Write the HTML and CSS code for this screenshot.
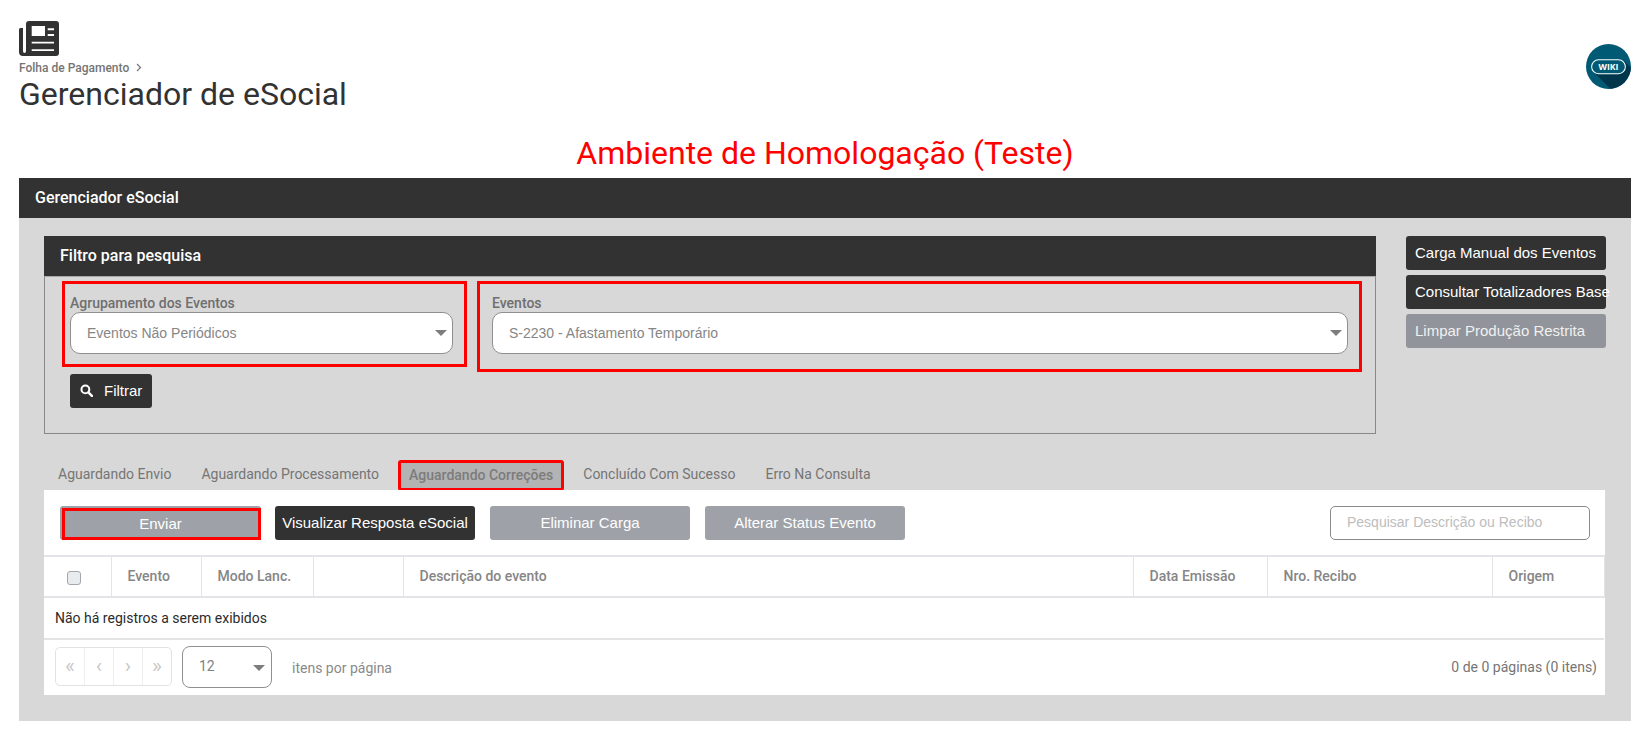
FILE: index.html
```html
<!DOCTYPE html>
<html lang="pt-br">
<head>
  <meta charset="UTF-8" />
  <title>Gerenciador de eSocial</title>
  <link rel="stylesheet" href="styles.css">
</head>
<body>

<div class="page">
  <header class="topo">
    <div class="topo-esq">
      <svg class="icone-jornal" viewBox="0 0 40 35" width="40" height="35">
        <path fill="#323232" fill-rule="evenodd" d="M4 7H1.5Q0 7 0 8.500V31Q0 35 4 35H37Q40 35 40 32V3Q40 0 37 0H10Q7 0 7 3V30Q7 32 5.500 32Q4 32 4 30ZM12.700 5H26V15H12.700ZM28.700 7.300H35V9.200H28.700ZM28.700 13H35V15H28.700ZM12.700 20.700H35V22.500H12.700ZM12.700 28.300H35V30H12.700Z"/>
      </svg>
      <div class="migalha">Folha de Pagamento
        <svg class="migalha-seta" viewBox="0 0 6 9" width="6" height="9"><path d="M1 1l3.500 3.500L1 8" fill="none" stroke="#757575" stroke-width="1.200"/></svg>
      </div>
      <h1>Gerenciador de eSocial</h1>
    </div>
    <svg class="wiki" viewBox="0 0 44 44" width="45" height="45">
      <defs><clipPath id="circulo"><circle cx="22" cy="22" r="22"/></clipPath></defs>
      <circle cx="22" cy="22" r="22" fill="#005a74"/>
      <path clip-path="url(#circulo)" fill="#00364c" d="M7 27L38 17L50 30L30 50Z"/>
      <rect x="5.500" y="15.500" width="33" height="13.500" rx="6.700" fill="#005a74" stroke="#fff" stroke-width="1"/>
      <text x="22" y="25.500" text-anchor="middle" class="wiki-txt">WIKI</text>
    </svg>
  </header>

  <div class="ambiente">Ambiente de Homologação (Teste)</div>

  <section class="gerenciador">
    <div class="barra">Gerenciador eSocial</div>
    <div class="gerenciador-corpo">

      <div class="linha-filtro">
        <div class="filtro">
          <div class="barra barra-filtro">Filtro para pesquisa</div>
          <div class="filtro-corpo">
            <div class="campos">
              <div class="campo campo-agrupamento">
                <label>Agrupamento dos Eventos</label>
                <div class="combo">Eventos Não Periódicos<span class="seta"></span></div>
              </div>
              <div class="campo campo-eventos">
                <label>Eventos</label>
                <div class="combo">S-2230 - Afastamento Temporário<span class="seta"></span></div>
              </div>
            </div>
            <button class="btn-filtrar">
              <svg viewBox="0 0 14 14" width="13" height="13"><circle cx="5.800" cy="5.800" r="4.200" fill="none" stroke="#fff" stroke-width="2.200"/><path d="M9 9l3.800 3.800" stroke="#fff" stroke-width="2.600" stroke-linecap="round"/></svg>
              Filtrar
            </button>
          </div>
        </div>
        <div class="acoes-lado">
          <button class="btn btn-escuro">Carga Manual dos Eventos</button>
          <button class="btn btn-escuro">Consultar Totalizadores Base</button>
          <button class="btn btn-apagado">Limpar Produção Restrita</button>
        </div>
      </div>

      <div class="abas">
        <div class="aba">Aguardando Envio</div>
        <div class="aba">Aguardando Processamento</div>
        <div class="aba aba-ativa">Aguardando Correções</div>
        <div class="aba">Concluído Com Sucesso</div>
        <div class="aba">Erro Na Consulta</div>
      </div>

      <div class="painel">
        <div class="ferramentas">
          <button class="btn-acao btn-desab btn-marcado"><span>Enviar</span></button>
          <button class="btn-acao btn-preto">Visualizar Resposta eSocial</button>
          <button class="btn-acao btn-desab">Eliminar Carga</button>
          <button class="btn-acao btn-desab">Alterar Status Evento</button>
          <input class="busca" type="text" placeholder="Pesquisar Descrição ou Recibo">
        </div>

        <table class="grade">
          <colgroup>
            <col class="c1"><col class="c2"><col class="c3"><col class="c4"><col class="c5"><col class="c6"><col class="c7"><col class="c8">
          </colgroup>
          <thead>
            <tr>
              <th class="th-check"><span class="check"></span></th>
              <th>Evento</th>
              <th>Modo Lanc.</th>
              <th></th>
              <th>Descrição do evento</th>
              <th>Data Emissão</th>
              <th>Nro. Recibo</th>
              <th>Origem</th>
            </tr>
          </thead>
          <tbody>
            <tr><td colspan="8">Não há registros a serem exibidos</td></tr>
          </tbody>
        </table>

        <div class="rodape">
          <div class="paginas">
            <span>«</span><span>‹</span><span>›</span><span>»</span>
          </div>
          <div class="combo combo-itens">12<span class="seta"></span></div>
          <span class="itens-txt">itens por página</span>
          <span class="total-txt">0 de 0 páginas (0 itens)</span>
        </div>
      </div>

    </div>
  </section>
</div>

</body>
</html>
```

FILE: styles.css
```css
body { margin: 0; background: #fff; font-family: Roboto, sans-serif; font-size: 14px; color: #323232; }
.page { padding: 21px 15px 13px 19px; }
button { font-family: "Liberation Sans", Arial, sans-serif; cursor: pointer; border: none; }

.topo { display: flex; justify-content: space-between; align-items: flex-start; height: 99px; }
.icone-jornal { display: block; }
.migalha { font-size: 12px; line-height: 14px; margin-top: 5px; color: #757575; font-weight: 500; }
.migalha-seta { margin-left: 4px; }
h1 { margin: -2px 0 0; font-size: 32px; line-height: 42px; font-weight: 400; color: #323232; }
.wiki { margin-top: 23px; }
.wiki-txt { font-family: "Open Sans", sans-serif; font-size: 8.500px; font-weight: 700; fill: #fff; }

.ambiente { color: #f00; font-size: 32px; line-height: 50px; padding-top: 8px; text-align: center; }

.gerenciador { background: #d8d8d8; height: 543px; }
.barra { background: #323232; color: #fff; font-size: 16px; font-weight: 500; height: 40px; line-height: 40px; padding-left: 16px; }
.gerenciador-corpo { padding: 18px 26px 0 25px; }

.linha-filtro { display: flex; justify-content: space-between; }
.filtro { width: 1332px; }
.barra-filtro { padding-left: 16px; }
.filtro-corpo { border: 1px solid #888; border-top-color: #a8a8a8; height: 158px; box-sizing: border-box; padding: 4px 0 0 17px; }

.campos { display: flex; gap: 10px; align-items: flex-start; }
.campo { border: 3px solid #f00; box-sizing: border-box; padding-top: 11px; flex: none; }
.campo label { display: block; font-size: 14px; line-height: 16px; margin-bottom: 1px; font-weight: 500; color: #6f6f6f; }
.campo-agrupamento { width: 405px; height: 86px; padding-left: 5px; padding-right: 11px; }
.campo-eventos { width: 885px; height: 91px; padding-left: 12px; padding-right: 11px; }

.combo { position: relative; box-sizing: border-box; height: 42px; line-height: 40px; background: #fff; border: 1px solid #8f8f8f; border-radius: 10px; padding-left: 16px; color: #868686; font-family: "Liberation Sans", Arial, sans-serif; font-size: 14px; }
.seta { position: absolute; right: 5px; top: 17px; width: 0; height: 0; border-left: 6px solid transparent; border-right: 6px solid transparent; border-top: 6px solid #7d7d7d; }

.btn-filtrar { display: flex; align-items: center; gap: 11px; margin: 2px 0 0 8px; width: 82px; height: 34px; padding: 0 0 2px 10px; background: #323232; color: #fff; border-radius: 3px; font-size: 15px; }

.acoes-lado { width: 200px; margin-right: -1px; display: flex; flex-direction: column; gap: 5px; }
.btn { height: 34px; width: 200px; padding: 0 0 2px 9px; text-align: left; color: #fff; font-size: 15px; border-radius: 3px; white-space: nowrap; }
.btn-escuro { background: #323232; }
.btn-apagado { background: #91959b; color: #f0f0f0; }

.abas { display: flex; gap: 8px; height: 31px; margin-top: 26px; padding-left: 3px; }
.aba { padding: 0 11px; line-height: 29px; color: #757575; box-sizing: border-box; height: 31px; }
.aba-ativa { border: 3px solid #f00; border-radius: 3px; padding: 0 8px; background: #b3b3b3; line-height: 25px; height: 31px; color: #7c7c7c; font-weight: 500; }

.painel { background: #fff; width: 1561px; height: 205px; margin-top: -1px; position: relative; }
.ferramentas { display: flex; gap: 15px; padding: 16px 15px 0 16px; height: 49px; box-sizing: content-box; }
.btn-acao { width: 200px; height: 34px; border-radius: 3px; color: #fff; font-size: 15px; white-space: nowrap; padding: 0 0 2px; }
.btn-desab { background: #9ea2a8; }
.btn-preto { background: #323232; }
.btn-marcado { width: 201px; margin-right: -1px; padding: 2px 0 0 2px; }
.btn-marcado span { display: block; height: 100%; box-sizing: border-box; border: 3px solid #f00; padding-right: 2px; line-height: 25px; }
.busca { margin-left: auto; width: 260px; height: 34px; box-sizing: border-box; border: 1px solid #8a8a8a; border-radius: 5px; padding: 0 16px 2px; font-family: "Liberation Sans", Arial, sans-serif; font-size: 14px; }
.busca::placeholder { color: #bdbdbd; opacity: 1; }

.grade { table-layout: fixed; border-collapse: collapse; width: 1560px; }
.c1 { width: 67px; } .c2 { width: 90px; } .c3 { width: 112px; } .c4 { width: 90px; }
.c5 { width: 730px; } .c6 { width: 134px; } .c7 { width: 225px; } .c8 { width: 112px; }
.grade th { height: 37px; padding: 0 0 2px 16px; border: 1px solid #e2e4e8; border-width: 2px 1px 2px 1px; text-align: left; font-weight: 500; color: #868686; }
.grade th:first-child { border-left: none; }
.grade td { height: 40px; padding: 0 0 0 11px; color: #2b2b2b; border-bottom: 2px solid #e4e4e4; }
.check { display: block; width: 14px; height: 14px; margin: 4px 0 0 7px; box-sizing: border-box; background: #e9ecef; border: 1px solid #a4a8ad; border-radius: 3px; }

.rodape { display: flex; align-items: center; height: 53px; padding: 0 8px 0 11px; }
.paginas { display: flex; width: 117px; height: 39px; box-sizing: border-box; border: 1px solid #e2e2e2; border-radius: 5px; }
.paginas span { flex: 1; text-align: center; line-height: 36px; font-size: 21px; color: #c8c8c8; border-right: 1px solid #eee; }
.paginas span:last-child { border-right: none; }
.combo-itens { width: 90px; height: 42px; line-height: 38px; margin-left: 10px; border-radius: 8px; color: #7f7f7f; font-family: Roboto, sans-serif; }
.combo-itens .seta { top: 18px; right: 6px; }
.itens-txt { margin: 3px 0 0 20px; color: #8a8a8a; }
.total-txt { margin: 0 0 0 auto; color: #757575; }
```
